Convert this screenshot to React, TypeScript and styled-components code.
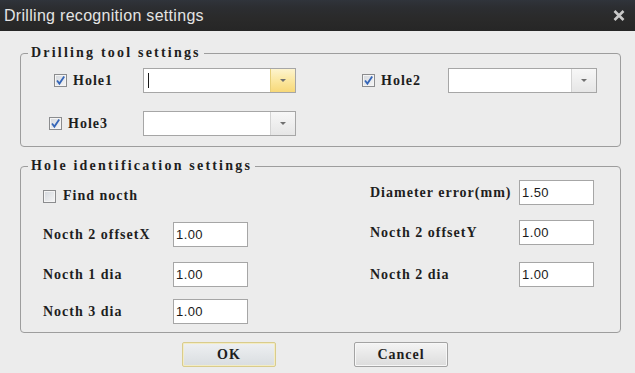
import React from 'react'
import styled, { createGlobalStyle } from 'styled-components'

const GlobalStyle = createGlobalStyle`
  html, body {
    margin: 0;
    padding: 0;
    background: #ececec;
  }
`

const Window = styled.div`
  width: 635px;
  height: 373px;
  background: #ececec;
  display: flex;
  flex-direction: column;
  overflow: hidden;
`
const TitleBar = styled.div`
  height: 31px;
  flex-shrink: 0;
  display: flex;
  align-items: center;
  justify-content: space-between;
  padding: 0 10px 0 4px;
  background: linear-gradient(#30343b 0%, #2c2e32 22%, #2a2a2a 60%, #262626 100%);
`
const Title = styled.span`
  font-family: "Liberation Sans", Arial, sans-serif;
  font-size: 16px;
  letter-spacing: 0.3px;
  color: #e4e4e4;
`
const Body = styled.div`
  padding: 14px 14px 0 20px;
  display: flex;
  flex-direction: column;
`
const Group = styled.fieldset<{ $top?: number }>`
  margin: ${p => p.$top ?? 0}px 0 0 0;
  padding: 0 0 ${p => (p.$top ? 8 : 10)}px 0;
  min-width: 0;
  border: 1px solid #9d9d9d;
  border-radius: 4px;
`
const Legend = styled.legend`
  margin-left: 7px;
  padding: 0 3px;
  line-height: 16px;
  font-family: "Liberation Serif", "Times New Roman", serif;
  font-weight: bold;
  font-size: 14px;
  letter-spacing: 2.2px;
  color: #1e1e1e;
`
const Row = styled.div<{ $top: number }>`
  display: flex;
  align-items: center;
  margin-top: ${p => p.$top}px;
`
const ToolCell = styled.div<{ $w: number; $pl: number }>`
  width: ${p => p.$w}px;
  padding-left: ${p => p.$pl}px;
  box-sizing: border-box;
  display: flex;
  align-items: center;
  gap: 6px;
`
const Text = styled.span`
  font-family: "Liberation Serif", "Times New Roman", serif;
  font-weight: bold;
  font-size: 14px;
  letter-spacing: 1px;
  color: #1e1e1e;
  white-space: pre;
`
const Box = styled.span`
  width: 13px;
  height: 13px;
  box-sizing: border-box;
  border: 1px solid #8b8c8e;
  background: linear-gradient(135deg, #d3d7dd, #f6f6f6);
  box-shadow: inset 0 0 0 1px #f4f4f4;
  display: flex;
  align-items: center;
  justify-content: center;
  flex-shrink: 0;
`
const Combo = styled.div<{ $w: number }>`
  width: ${p => p.$w}px;
  height: 25px;
  box-sizing: border-box;
  border: 1px solid #a6a6a6;
  background: #fff;
  display: flex;
  align-items: stretch;
`
const ComboText = styled.div`
  flex: 1;
  display: flex;
  align-items: center;
  padding-left: 4px;
`
const Caret = styled.span`
  width: 1px;
  height: 15px;
  background: #1a1a1a;
`
const Arrow = styled.div<{ $hot?: boolean }>`
  width: 24px;
  display: flex;
  align-items: center;
  justify-content: center;
  border-left: 1px solid ${p => (p.$hot ? '#e6cf7a' : '#d3d3d3')};
  background: ${p =>
    p.$hot
      ? 'linear-gradient(#fdf4cf, #fbe7a0 50%, #f7d878)'
      : 'linear-gradient(#f7f7f7, #e6e6e6)'};
  &::after {
    content: '';
    border-left: 3px solid transparent;
    border-right: 3px solid transparent;
    border-top: 3px solid #707070;
  }
`
const Columns = styled.div`
  display: flex;
`
const Column = styled.div<{ $w?: number }>`
  width: ${p => (p.$w ? `${p.$w}px` : 'auto')};
  display: flex;
  flex-direction: column;
`
const FieldRow = styled.div<{ $top: number; $pl: number; $lw: number }>`
  display: flex;
  align-items: center;
  margin-top: ${p => p.$top}px;
  padding-left: ${p => p.$pl}px;
  & > ${Text} {
    width: ${p => p.$lw}px;
  }
`
const CheckRow = styled.div<{ $top: number; $pl: number }>`
  display: flex;
  align-items: center;
  gap: 7px;
  height: 14px;
  margin-top: ${p => p.$top}px;
  padding-left: ${p => p.$pl}px;
`
const Field = styled.div`
  width: 75px;
  height: 25px;
  box-sizing: border-box;
  border: 1px solid #a6a6a6;
  background: #fff;
  display: flex;
  align-items: center;
  padding-left: 2px;
  font-family: "Liberation Sans", Arial, sans-serif;
  font-size: 13px;
  letter-spacing: 0.4px;
  color: #1a1a1a;
`
const Buttons = styled.div`
  display: flex;
  gap: 78px;
  margin-top: 9px;
  padding-left: 162px;
`
const Button = styled.div<{ $focus?: boolean }>`
  width: 94px;
  height: 25px;
  box-sizing: border-box;
  border: 1px solid ${p => (p.$focus ? '#d9cc8c' : '#a3a3a3')};
  border-radius: 2px;
  background: ${p =>
    p.$focus ? 'linear-gradient(#eef0f2, #d9dde0)' : 'linear-gradient(#f4f4f4, #dcdcdc)'};
  box-shadow: inset 0 0 0 1px ${p => (p.$focus ? '#f3ecc4' : '#f7f7f7')};
  display: flex;
  align-items: center;
  justify-content: center;
`

function Check({ on }: { on?: boolean }) {
  return (
    <Box>
      {on && (
        <svg width="11" height="11" viewBox="0 0 11 11">
          <path d="M2 5.5 L4.4 8.6 L9.2 1.6" fill="none" stroke="#3566b8" strokeWidth="1.8" />
        </svg>
      )}
    </Box>
  )
}

function CloseIcon() {
  return (
    <svg width="12" height="11" viewBox="0 0 12 11">
      <path d="M1.5 1 L10.5 10 M10.5 1 L1.5 10" stroke="#c9c9c9" strokeWidth="2.6" />
    </svg>
  )
}

export default function App() {
  return (
    <Window>
      <GlobalStyle />
      <TitleBar>
        <Title>Drilling recognition settings</Title>
        <CloseIcon />
      </TitleBar>
      <Body>
        <Group>
          <Legend>Drilling tool settings</Legend>
          <Row $top={7}>
            <ToolCell $w={122} $pl={33}>
              <Check on />
              <Text>Hole1</Text>
            </ToolCell>
            <Combo $w={153}>
              <ComboText><Caret /></ComboText>
              <Arrow $hot />
            </Combo>
            <ToolCell $w={152} $pl={66}>
              <Check on />
              <Text>Hole2</Text>
            </ToolCell>
            <Combo $w={149}>
              <ComboText />
              <Arrow />
            </Combo>
          </Row>
          <Row $top={18}>
            <ToolCell $w={122} $pl={28}>
              <Check on />
              <Text>Hole3</Text>
            </ToolCell>
            <Combo $w={153}>
              <ComboText />
              <Arrow />
            </Combo>
          </Row>
        </Group>
        <Group $top={11}>
          <Legend>Hole identification settings</Legend>
          <Columns>
            <Column $w={349}>
              <CheckRow $top={15} $pl={22}>
                <Check />
                <Text>Find nocth</Text>
              </CheckRow>
              <FieldRow $top={19} $pl={22} $lw={130}>
                <Text>Nocth 2 offsetX</Text>
                <Field>1.00</Field>
              </FieldRow>
              <FieldRow $top={15} $pl={22} $lw={130}>
                <Text>Nocth 1 dia</Text>
                <Field>1.00</Field>
              </FieldRow>
              <FieldRow $top={12} $pl={22} $lw={130}>
                <Text>Nocth 3 dia</Text>
                <Field>1.00</Field>
              </FieldRow>
            </Column>
            <Column>
              <FieldRow $top={6} $pl={0} $lw={149}>
                <Text>Diameter error(mm)</Text>
                <Field>1.50</Field>
              </FieldRow>
              <FieldRow $top={15} $pl={0} $lw={149}>
                <Text>Nocth 2 offsetY</Text>
                <Field>1.00</Field>
              </FieldRow>
              <FieldRow $top={17} $pl={0} $lw={149}>
                <Text>Nocth 2 dia</Text>
                <Field>1.00</Field>
              </FieldRow>
            </Column>
          </Columns>
        </Group>
        <Buttons>
          <Button $focus><Text>OK</Text></Button>
          <Button><Text>Cancel</Text></Button>
        </Buttons>
      </Body>
    </Window>
  )
}
